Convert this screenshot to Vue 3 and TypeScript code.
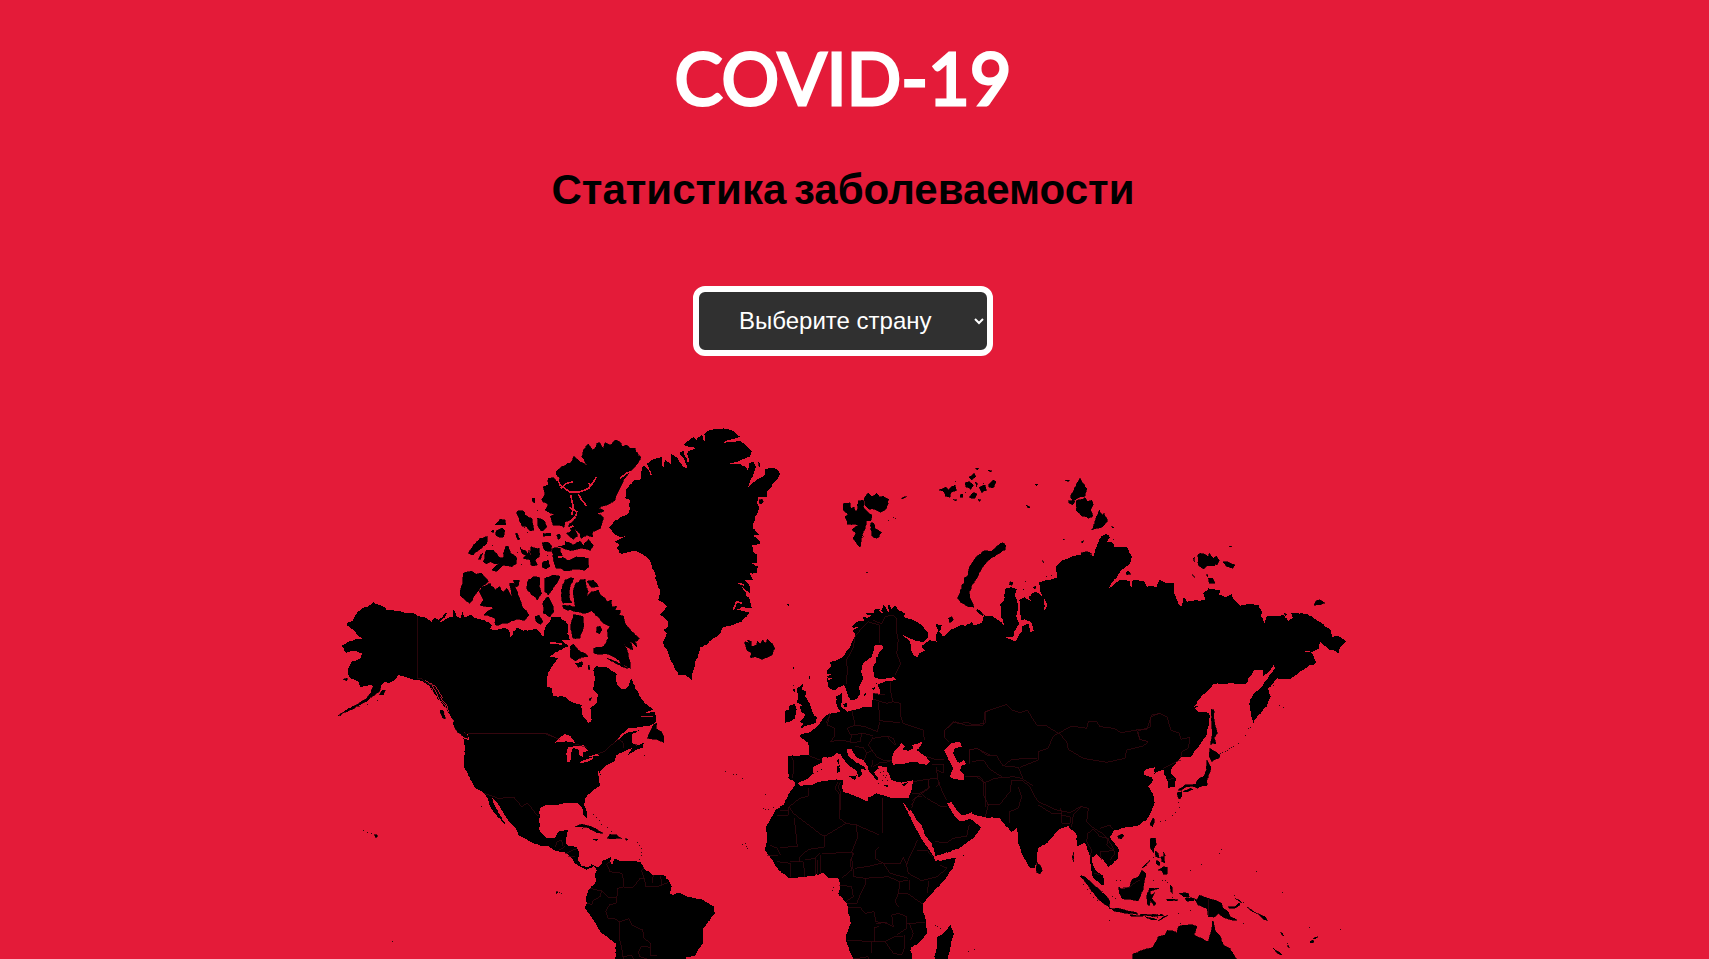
<script setup lang="ts">
import { ref } from 'vue'

type Sheet = 'A' | 'C' | 'D' | 'E' | 'F' | 'G' | 'H' | 'I' | 'J'

// Map sheets: top-left corner of each survey sheet, three sheet units per map unit.
const sheets: Record<Sheet, [number, number]> = {
  A: [330, 420], C: [520, 420], D: [440, 660], E: [740, 560], F: [820, 450],
  G: [960, 450], H: [740, 770], I: [940, 680], J: [1110, 680],
}

const LEFT = 330
const TOP = 420

function project(sheet: Sheet, points: string): number[][] {
  const [ox, oy] = sheets[sheet]
  return points.trim().split(/\s+/).map((p) => {
    const [x, y] = p.split(',').map(Number)
    return [ox - LEFT + x / 3, oy - TOP + y / 3]
  })
}

// Midpoint displacement gives coastlines their ragged edge.
let seed = 7
function rand(): number {
  seed = (seed * 16807) % 2147483647
  return seed / 2147483647 - 0.5
}

function roughen(points: number[][], amount: number): number[][] {
  const out: number[][] = []
  points.forEach((a, i) => {
    const b = points[(i + 1) % points.length]
    const length = Math.hypot(b[0] - a[0], b[1] - a[1])
    out.push(a)
    const steps = Math.min(12, Math.floor(length / 2.2))
    for (let s = 1; s < steps; s++) {
      const t = s / steps
      out.push([
        a[0] + (b[0] - a[0]) * t + rand() * amount,
        a[1] + (b[1] - a[1]) * t + rand() * amount,
      ])
    }
  })
  return out
}

function toPath(points: number[][], closed: boolean): string {
  return 'M' + points.map((p) => p[0].toFixed(1) + ',' + p[1].toFixed(1)).join('L') + (closed ? 'Z' : '')
}

function areas(sheet: Sheet, list: string[], amount = 1.3): string {
  return list.map((s) => toPath(roughen(project(sheet, s), amount), true)).join('')
}

function lines(sheet: Sheet, list: string[]): string {
  return list.map((s) => toPath(project(sheet, s), false)).join('')
}

function dots(sheet: Sheet, list: string): string {
  return project(sheet, list).map(([x, y]) => `M${Math.round(x)},${Math.round(y)}h1v1h-1z`).join('')
}

const eurasia = toPath(
  roughen(
    [
      ...project('E', `262,330 275,318 270,308 290,300 310,290 318,275 330,262 338,240 346,225 338,212 355,200 335,202
        350,186 372,182 368,172 385,170 378,158 400,160 405,146 425,150 430,136 440,146 447,132 455,148 465,136 474,150
        495,160 492,172 520,180 545,195 563,215 565,232 550,246 535,243 510,235 490,226 510,246 512,268 518,282 532,291
        538,280 555,272 545,256 570,240 590,245 588,228 594,212 585,190 605,195 598,215 610,230 630,210 665,195`),
      ...project('G', `18,528 35,515 40,525 65,520 72,495 100,500 135,527 122,495 120,465 132,450 138,415 152,411 170,418
        165,440 175,465 169,500 178,520 163,545 160,562 138,562 165,573 185,545 187,528 205,520 210,545 222,544 213,515
        195,508 182,510 178,450 195,440 188,410 194,440 218,460 205,440 228,425 250,440 255,485 262,465 240,425 236,395 290,385
        288,350 310,330 350,315 385,310 400,320 412,285 425,258 440,252 450,262 440,275 460,280 462,292 500,290 515,320
        510,340 480,365 460,395 445,415 480,390 510,392 512,418 518,390 550,393 562,410 590,410 600,388 618,400 642,400
        642,430 655,460 663,470 672,440 680,455 700,452 735,450 730,430 745,415 780,422 775,435 800,440 815,432 820,445
        840,467 875,462 895,465 905,485 904,500 915,522 920,500 970,495 985,515 998,505 992,488 1040,492 1080,515
        1112,542 1118,565 1122,557 1140,560 1158,575 1142,590 1135,612 1120,600 1110,600 1080,575 1078,595 1060,605
        1030,603 1055,608 1068,635 1062,645 1050,645 1020,665 990,688 950,685 925,715 932,740 920,770 905,785 885,808
        882,822 874,800 868,760 878,735 905,710 920,690 938,665 945,655 940,645 928,665 908,678 908,660 885,660 865,685
        858,703 820,700 760,702 735,730 700,770`),
      ...project('J', `268,76 255,85 265,97 285,95 298,100 298,130 290,165 265,202 240,232 215,232 200,245 183,268
        183,280 197,295 195,322 172,325 175,308 167,290 160,270 140,275 125,292 132,285 135,262 110,268 100,282 125,292
        130,300 115,320 130,345 135,370`),
      ...project('I', `645,365 640,380 620,420 590,438 545,445 525,450 510,470 520,485 537,510 535,535 505,560 490,540
        470,523 455,533 460,555 468,572 487,585 493,605 490,618 465,600 452,570 447,520 435,487 412,498 410,465 385,438
        355,450 320,490 293,505 291,540 285,562 270,565 250,530 235,490 230,445 215,455 195,435 180,415 130,412 95,400`),
      ...project('H', `700,150 722,172 700,205 650,238 600,255 583,258 585,272 600,272 648,262 640,292 610,335 575,370
        550,400 550,425 558,455 560,490 545,510 512,535 516,567 516,600 345,600 340,567 320,520 318,495 333,460 320,400
        295,370 300,345 295,325 265,325 250,310 200,320 150,325 115,300 100,275 75,240 82,200 77,175 90,150 105,122
        130,105 137,90 150,65 165,45`),
      ...project('E', `163,664 145,655 143,600 143,590 152,587 207,585 205,547 180,530 182,522 205,518 225,505 240,490 258,465
        275,460 300,455 290,435 288,410 305,400 306,425 302,440 320,455 350,448 375,440 395,442 398,420 400,398 418,405
        420,390 412,375 440,362 468,360 460,352 420,358 402,350 398,325 408,300 420,275 430,262 425,254 405,255 395,290
        370,310 363,335 370,355 358,378 360,400 350,418 330,422 320,395 312,372 300,380 282,392 265,382`),
    ],
    1.1,
  ),
  true,
)

const northAmerica = toPath(
  roughen(
    [
      ...project('A', `130,545 138,552 165,560 170,570 200,572 230,580 250,578 262,588 285,592 305,605 315,592 325,600
        352,577 345,592 330,606 362,590 368,590 371,567 380,590 392,594 398,576 404,592 420,584 440,595 465,600 485,615
        480,628 500,630 525,622 538,632 543,655 550,635 560,622 580,632 600,630 620,626 640,650 645,625 655,610 665,590
        690,590`),
      ...project('C', `135,612 128,600 138,605 145,620 142,640 150,660 125,660 145,680 120,690 90,710 115,715 95,740 84,760 80,785`),
      ...project('D', `322,82 335,85 340,107 370,110 400,130 425,135 427,165 445,190 455,180 450,145 470,130 474,105
        458,85 465,60 460,30 470,18 500,22 530,42 530,70 545,88 560,85 574,55 585,80 600,110 615,130 640,148 612,160
        645,155 648,185 630,200 600,205 565,205 545,222 522,250 548,228 575,213 598,210 605,215 575,225 575,245 588,258
        612,248 610,262 580,275 564,285 575,265 550,275 530,285 522,305 500,315 490,325 480,335 485,350 475,330 478,352 480,375
        450,400 435,415 432,435 442,460 440,473 430,465 425,440 415,430 395,428 370,430 345,435 320,435 300,445
        297,480 300,515 320,535 345,533 358,512 385,508 380,525 378,550 385,557 410,560 417,575 413,600 425,618 445,622
        455,612 470,622 480,618 490,600 515,590 510,605 518,612 522,597 545,603 575,603 600,605 612,625 640,645 670,645
        685,660 695,680 690,700 715,698 745,712 785,718 822,740 824,760 805,785 790,805 788,850 765,887 740,890 735,920
        528,920 527,850 480,815 460,780 435,745 440,730 438,710 445,690 468,665 465,640 470,632 460,618 440,630
        425,622 405,610 395,595 380,580 345,572 325,557 305,558 270,545 235,525 230,510 200,475 175,435 155,412 165,440
        180,465 197,493 185,485 165,460 150,440 145,420 132,400 105,385 90,355 72,320 75,260 70,235 88,242 85,225
        60,210 40,195`),
      ...project('A', `365,895 350,870 335,850 320,830 300,800 280,785 262,780 245,778 225,770 205,765 195,780 175,790
        165,785 155,795 135,815 125,795 90,800 85,785 60,775 52,750 62,730 75,722 92,715 95,700 75,692 50,698 35,677
        55,665 75,658 98,655 85,648 70,630 50,615 50,608 70,600 80,580 95,565 120,555`),
    ],
    1.1,
  ),
  true,
)

const greenland = areas('C', [
  `490,75 520,52 530,60 545,45 555,70 553,42 570,30 610,25 640,33 660,50 630,60 610,68 660,62 680,80 695,92 690,110
  660,122 628,130 660,132 675,140 685,155 687,130 700,125 708,140 700,165 685,200 705,185 735,165 736,148 750,143
  770,148 782,163 765,185 755,200 740,215 740,230 715,230 712,250 718,265 705,290 698,325 718,345 700,345 722,370
  695,378 700,395 712,405 712,430 695,430 715,440 710,460 690,460 700,480 675,480 690,500 692,520 665,500 690,540
  695,565 670,560 645,570 690,578 665,605 630,618 610,622 595,645 575,660 560,675 540,680 537,700 525,730 520,750
  515,780 495,765 475,765 460,735 445,700 430,670 440,640 428,630 445,620 442,600 420,585 440,560 425,545 415,540
  420,510 410,490 405,460 395,435 380,410 355,395 330,395 305,402 290,385 300,375 283,365 320,350 300,350 280,340
  268,322 285,300 325,282 332,240 315,235 320,205 345,180 360,180 365,140 375,138 398,168 380,130 400,118 425,112
  430,150 435,120 455,135 450,100 470,112 490,140 500,145 495,125 480,98 490,92 505,130 503,95 530,85`,
])

const arctic =
  areas('A', [
    '400,460 425,453 438,463 455,460 475,485 450,505 435,525 420,550 400,535 390,525 398,490',
    `480,490 455,500 448,515 460,540 450,555 475,560 490,565 470,575 462,585 480,590 495,595 497,615 530,610
    560,598 585,600 598,585 580,565 570,540 560,510 552,490 540,490 545,530 530,505 520,515 510,500 495,510`,
    '550,480 568,480 566,495 558,502', '415,400 430,375 450,355 473,350 470,370 455,385 440,395 430,405',
    '445,418 453,403 458,400 452,418',
    `460,425 470,390 490,390 500,400 505,410 520,415 525,380 535,378 540,400 558,410 558,432 545,440 520,435
    500,454 485,450 500,435 515,425 495,432 480,425 470,432`,
    '495,315 510,298 525,300 528,314 513,314', '497,335 517,325 525,332 520,352 508,352 497,345', '482,335 490,329 492,337',
    '560,275 580,272 585,285 605,295 612,330 600,333 590,320 575,318 568,295',
    '622,295 640,300 650,320 635,333 625,320', '640,340 662,340 662,348 640,349', '557,340 562,340 570,358 564,360',
    '570,382 590,395 592,410 597,390 600,410 602,380 628,385 628,410 615,420 622,435 605,437 600,420 580,415 588,405 575,400',
    '637,368 657,368 665,378 662,393 644,391', '640,425 655,419 660,439 648,447 636,440', '607,235 615,235 615,250 607,244',
    '595,480 610,470 630,473 628,500 635,520 622,540 605,525 590,505', '645,475 670,465 690,470 680,490 655,525 645,515',
    '640,545 655,530 665,550 672,575 660,590 640,580', '615,590 627,585 639,605 631,613 619,605',
    '25,887 50,870 75,856 90,848 110,836 122,818 130,800 155,790 150,810 130,828 110,845 90,855 60,870',
    '148,825 158,810 166,810 161,824', '330,870 340,870 345,898 337,893', '372,915 395,930 412,945 414,955 400,950 380,932',
    '172,770 185,757 192,768 180,780', '40,778 52,775 50,783', '668,385 690,385 690,445 678,445 668,410',
    '134,1243 142,1246 142,1252 136,1252',
  ]) +
  areas('C', [
    `108,155 125,140 155,125 162,108 175,120 203,138 185,110 190,90 205,72 218,90 225,85 230,70 240,68 250,85 255,68
    272,75 285,60 300,65 305,80 320,75 330,85 345,84 348,95 362,110 355,130 335,150 315,175 300,205 290,225 280,245
    260,255 235,265 252,272 232,280 250,292 242,325 218,335 218,350 200,345 182,355 180,342 165,325 172,350 160,358
    140,340 155,330 145,325 150,310 170,295 165,285 150,300 135,305 132,322 115,315 100,315 90,290 105,285 75,270
    85,255 65,240 75,222 70,200 85,192 85,175 100,172 108,185 120,175 108,165`,
    '115,380 135,375 135,362 160,375 180,362 190,375 205,358 220,375 210,392 185,385 150,392 130,385',
    '95,388 120,395 130,415 150,420 165,412 185,412 205,415 207,440 195,450 165,448 140,453 105,440',
    '162,475 150,473 135,480 123,510 125,540 130,550 155,548 148,530 150,500',
    `180,480 195,478 198,500 205,515 200,530 215,515 235,510 242,525 255,535 262,545 275,540 275,560 290,558 285,570 300,570
    298,585 312,590 315,610 335,635 358,655 345,665 350,682 330,665 340,690 318,680 305,660 315,680 325,700 332,745 310,735
    285,712 262,702 240,703 222,700 222,685 250,680 265,655 262,630 270,620 250,610 235,590 215,572 190,580 165,575 130,565
    128,555 165,560 160,520 165,495`,
    '200,485 220,480 235,500 215,502', '230,622 240,618 246,630 238,642 229,636', '160,585 190,590 190,625 180,655 160,655 152,620',
    '150,710 150,680 160,672 175,690 195,700 205,712 185,712 165,722', '175,738 187,727 185,741', '204,735 208,735 208,748 204,748',
    '674,665 688,672 682,660 693,664 695,680 710,675 712,663 722,672 728,660 738,670 742,658 758,672 765,685 755,705 725,718 706,710 690,712 695,698 680,690',
    '717,240 727,237 730,246 724,252 717,250', '713,125 718,128 720,142 716,138', '110,345 118,342 121,355 114,358',
  ]) +
  areas('F', [
    `70,162 90,158 92,175 102,172 105,185 112,180 115,152 130,150 132,175 155,195 152,212 140,212 130,245 120,292 98,265
    108,250 95,240 118,225 82,222 75,200 85,195 70,180`,
    '132,148 145,130 155,140 170,130 178,142 190,138 206,148 200,175 180,187 165,178 148,178 135,165',
    '152,218 160,218 165,235 185,248 170,265 155,258', '245,145 258,139 258,141 247,147',
    '358,120 378,112 385,120 405,105 410,120 395,125 390,142 375,138 372,125', '435,100 448,95 460,105 452,118 438,112',
    '465,95 472,100 470,110', '447,82 462,70 468,80 455,90', '478,112 495,105 500,120 485,128', '505,105 520,90 528,95 522,112 508,112',
    '448,142 458,128 472,132 465,145', '420,135 428,132 428,142 420,142', '467,55 476,54 472,60', '503,61 515,62 512,66',
    '644,103 654,102 650,107', '618,165 630,172 625,174', '736,90 748,91 744,95', '400,148 410,150 408,154', '475,148 482,150 478,154',
    `540,280 550,278 558,287 555,300 530,314 503,332 484,357 469,387 458,402 448,425 452,450 462,472 440,468 428,460 412,445
    420,430 425,405 433,400 432,385 442,378 452,345 468,322 488,304 515,303`,
    '470,480 480,482 490,495 480,492', '385,505 395,500 400,510 390,518', '570,395 580,398 576,406 568,404',
    '752,138 768,108 780,85 785,95 800,115 795,138 775,143 765,150 752,145', '745,152 765,152 758,165 748,160',
    '768,152 795,143 803,155 815,150 820,165 812,180 818,198 805,205 785,198 768,180',
    '838,180 848,195 852,190 863,213 850,228 815,240 825,212', '640,412 648,408 645,418', '728,268 732,268 732,270', '666,332 670,332 670,338',
    '782,276 792,272 788,278', '782,310 800,305 815,312 800,318',
  ]) +
  areas('G', [
    '713,315 720,310 732,312 745,320 748,310 758,322 765,348 740,348 730,357 715,345', '760,325 770,318 778,332 770,345 760,340',
    '788,335 800,335 825,345 818,355 800,350', '745,385 758,385 766,400 748,400', '738,374 745,374 742,380', '700,325 703,322 703,335',
    '1062,466 1068,452 1080,449 1094,459 1080,464', '497,368 505,362 512,372 500,374', '808,289 815,289 813,291', '697,374 705,381 702,381',
    '455,228 463,233 458,235', '972,490 980,493 976,498',
  ], 0.6)

const europeIslands =
  areas('E', [
    `170,385 190,372 185,388 200,395 195,410 210,430 215,448 222,468 232,470 228,488 205,495 180,505 190,490 178,485 190,475
    195,462 185,458 180,440 188,435 172,428 175,410`,
    '135,452 148,448 145,437 165,433 170,448 165,475 150,485 135,488', '140,133 151,130 146,137',
    '300,576 320,566 325,588 345,605 375,622 378,632 362,625 366,643 356,652 350,635 325,615 310,598', '325,648 350,646 345,660',
    '290,618 299,616 299,636 290,638', '292,600 297,596 297,614 293,612', '430,675 450,678 440,681', '485,672 503,667 492,680',
    '310,432 322,428 322,440 312,440', '372,405 378,398 376,412', '408,370 412,368 412,374', '396,385 405,382 402,391', '624,175 634,171 640,182 630,188',
    '160,388 166,385 162,402', '206,348 211,350 207,360', '157,320 163,322 160,328', '240,630 247,627 244,632',
    '712,148 725,158 728,168 716,160', '445,618 465,615 460,622 446,625', '405,655 415,650 412,662', '520,545 526,540 526,549',
  ], 0.8) +
  areas('H', ['590,505 612,488 632,465 641,492 632,530 618,580 590,580 583,560 590,535', '667,256 677,257 670,259'], 1)

const pacific =
  areas('I', [
    '290,545 300,555 307,572 300,581 291,578', '420,588 435,590 455,610 480,630 490,640 500,650 510,665 508,683 490,670 465,645 440,612',
    '508,685 530,685 555,690 580,695 595,703 560,700 530,695', '600,703 625,704 655,704 655,709 625,708',
    '537,620 545,628 570,620 575,600 595,590 605,570 617,580 612,610 610,625 600,650 595,663 570,658 545,655 538,640',
    '533,468 545,462 552,466 545,476 535,475', '630,435 640,413 643,420 638,440', '632,478 645,475 648,495 640,510 632,505',
    '397,530 401,518 399,545', '620,648 628,625 658,625 630,632 632,645 645,638 635,655 648,670 642,678 632,660 628,678 622,672',
  ], 1) +
  areas('J', [
    '303,88 311,90 314,130 322,160 312,175 318,192 308,190 302,195 306,160 304,120', '300,205 330,225 328,235 312,240 305,245 298,230',
    '290,240 302,260 300,275 292,295 290,318 275,318 262,325 245,318 225,322 215,330 205,330 225,315 255,312 268,295 280,290 290,270',
    '202,338 215,335 215,350 208,358 203,350', '220,335 240,325 250,328 232,336', '122,475 135,475 138,495 130,508 120,500',
    '145,570 160,560 172,562 172,582 160,582 155,572', '95,565 120,540 118,545 100,563', '135,512 145,520 148,535 138,530',
    '152,530 162,530 165,548 155,545', '140,540 150,548 148,558 138,550', '122,505 132,512 130,518', '160,515 166,528 162,530',
    `250,655 262,660 268,645 295,655 320,662 335,670 340,685 355,695 360,710 380,720 365,720 340,712 325,700 315,710 295,710
    290,685 265,675`,
    '208,640 235,640 238,652 220,650', '225,655 250,655 252,662 230,663', '355,680 375,680 388,668 390,675 375,685 358,685',
    '410,680 425,690 440,700 425,694', '443,700 465,710 472,722 460,717', '490,805 505,815 516,825 500,818', '600,785 608,780 612,786 602,790',
    '610,775 625,770 615,777', '145,722 160,710 175,705 155,718', '105,710 130,715 140,720 118,716', '170,658 205,660 200,662 172,662',
    '60,705 100,706 100,709 62,709', '120,706 160,704 160,707 122,709', '375,655 388,660 396,670 388,664',
    `68,822 100,810 130,800 145,770 165,765 172,750 200,758 205,740 225,735 250,735 262,740 252,765 275,775 295,785 302,760
    308,722 318,755 330,768 340,795 360,805 380,837 380,860 68,860`,
    '181,615 186,620 188,640 183,636', '512,755 522,768 515,764', '535,795 538,803 532,799',
  ], 1) +
  areas('D', [
    '622,235 640,195 650,190 648,205 665,215 672,230 672,248 655,240 640,238', '405,500 425,493 455,500 490,520 470,518 440,502',
    '500,535 510,523 530,525 545,535 520,537', '458,538 475,537 470,542', '555,536 565,538 558,541', '348,695 354,696 350,701',
    '405,10 425,5 428,14 415,22', '500,-5 530,5 565,25 545,20', '443,20 449,22 448,30', '447,118 455,113 450,124', '574,252 590,255 580,260',
  ], 0.8)

const specks =
  dots('D', `122,438 855,332 880,343 888,341 425,505 460,462 468,470 478,480 482,492 500,500 512,512 590,545 598,555
  602,565 604,575 604,585 598,598 612,284 358,697 364,700`) +
  dots('H', `7,222 18,228 22,235 15,220 68,115 75,118 85,118 100,112 75,72 275,360 280,350 585,465 592,468
  600,473 685,542 703,536`) +
  dots('J', `150,422 165,420 185,405 195,395 207,380 205,365 330,218 335,216 345,212 350,209 358,205 364,201 370,198 385,190
  405,165 415,145 420,140 332,508 326,520 272,552 240,570 438,574 515,637 508,75 518,82 515,760
  530,790 690,748 598,740 400,730 185,650 130,530 165,600 172,605 372,645 400,665
  490,15 487,2 130,600 155,600 210,730 240,690 205,700`) +
  dots('E', '378,36 6,655 160,375 420,635 430,632 438,645 425,660 415,668 440,660 435,652 428,645 220,640 230,632 415,625') +
  dots('F', '140,365 205,209 220,200 225,204 405,94 435,125 490,98 880,266 678,377 692,374 615,394') +
  dots('I', '400,515 398,540 422,585 430,612 440,628 450,640 460,650 470,660 508,720 540,600 528,600 85,813 103,806 650,712 525,655 515,648') +
  dots('A', '485,375 562,395 572,432 650,405 590,337 582,320 622,270 110,853 140,840 30,885 100,1229 112,1235 122,1238 187,1563')

const seas =
  areas('E', [
    `172,670 200,658 218,642 220,622 245,608 248,592 270,592 290,580 305,582 318,580 322,566 335,568 348,590 372,602 384,620 388,635 405,655
    412,652 402,638 415,625 412,618 440,620 442,635 455,660 485,668 520,660 515,690 505,715 460,715 410,700 385,712 385,725
    350,710 310,695 305,680 310,662 290,658 240,665 215,675 180,677`,
    '455,605 460,580 485,550 495,560 488,568 505,573 522,565 515,555 548,545 540,560 530,570 560,592 570,605 560,615 520,605 490,612 460,614',
    '612,570 635,550 660,545 665,560 645,565 640,580 652,605 660,608 672,600 678,612 662,618 660,632 671,642 671,660 645,658 630,650 640,625 622,590',
  ], 0.8) +
  areas('H', [
    '490,100 498,108 508,125 512,118 530,150 545,165 555,195 575,220 585,250 585,268 575,250 550,215 530,180 515,150 505,130',
    '622,100 635,97 650,120 665,135 685,133 695,126 700,145 725,144 715,165 690,145 680,150 660,154 645,140 632,118',
  ], 0.6) +
  areas('D', [
    '345,248 358,235 375,222 392,228 405,250 385,245 365,245',
    '380,305 380,275 385,262 405,258 430,256 445,272 430,275 428,292 418,285 415,268 398,265 392,290 390,305',
    '418,308 430,300 460,292 450,302 430,308', '445,290 473,281 476,287 454,292', '548,222 570,207 640,195 625,225 605,245 588,255 575,245 575,225 598,210',
    '690,700 700,690 712,698 700,706', '513,603 520,603 519,612 514,612',
  ], 0.8)

const inlets =
  lines('C', [
    '108,165 120,195 150,216 180,215 205,206 212,198 230,170', '175,222 185,240 200,258', '122,205 140,190 160,185', '152,225 160,262 155,285',
    '300,175 320,160 335,153', '212,198 206,190', '148,262 170,275 168,288', '640,570 650,545 665,550', '655,490 672,495',
    '115,412 205,398', '90,668 125,672', '118,325 145,325 160,318',
  ]) +
  lines('G', ['865,415 858,410']) +
  lines('E', ['262,345 272,343', '265,357 275,355', '378,172 392,166', '420,150 428,160', '440,142 446,155'])

const fjords = lines('A', [
  '285,780 305,795 318,815 328,840 345,855 352,875', '300,788 318,800 330,822 340,835', '305,805 312,825 322,835', '352,880 372,905',
]) + lines('D', ['0,112 20,135 25,155', '8,140 15,165', '475,340 478,350', '602,170 640,168'])

const borders =
  lines('A', ['262,588 262,775 275,775 290,790 310,795', '418,940 645,940 655,945 690,958']) +
  lines('D', [
    '85,220 318,220 345,232', '405,252 440,262', '473,282 492,275 520,250 535,238 548,245 552,265', '132,400 175,415 222,412 245,440 262,430 280,450 290,465 298,466',
    '345,560 352,545 365,540 368,558', '358,570 375,560', '375,582 395,572 412,565', '385,590 405,588', '510,605 500,612 510,635 545,640 552,665 550,682 532,685 530,730',
    '450,685 485,693 505,712 528,712', '485,693 480,710 460,722 455,735 440,728', '528,730 508,735 497,755 505,775 522,775 538,785 537,830 545,865 550,897',
    '552,682 580,682 600,655 612,655 605,632 612,622', '612,655 618,680 650,680 685,668', '640,645 636,668', '662,648 665,675',
    '538,785 568,776 575,795 608,810 612,835 632,850 630,885 650,888', '550,890 575,885 580,897', '630,862 605,858 595,875 600,890 620,897',
  ]) +
  lines('E', [
    '318,372 322,335 320,300 340,262 345,230 365,205 385,185 400,190 418,195 418,250', '400,180 425,192 435,170 460,165 470,175 468,210 475,240 470,280 482,310 465,345',
    '450,365 452,395 458,425', '400,400 435,405', '400,418 440,430 458,425 480,430 482,470 490,490 550,510 553,540', '415,425 420,482 480,488', '335,450 345,495 322,505 332,525 370,520 400,527',
    '345,495 375,500 412,515 420,485', '270,460 262,495 285,505 282,530 272,545', '272,545 300,540 330,545 335,525', '365,520 360,545 330,548', '400,530 385,555 410,590 430,600 455,600',
    '400,535 440,528 465,555', '440,528 460,535 468,555', '345,560 370,562 380,580 400,570', '380,580 372,600', '400,620 420,608 450,605', '398,600 395,622', '270,465 258,490', '155,592 162,605 158,655', '207,587 240,600',
    '750,452 735,455 735,490 700,495 685,488 655,490 640,485 615,510 612,530 625,545', '688,612 688,570 710,565 750,585', '560,590 585,598 612,600', '575,612 612,612 610,640 590,630',
    '520,665 560,658 592,655 590,620', '592,655 605,690 620,720', '690,650 720,650 735,670 735,740', '302,665 295,680 302,700 300,750', '427,715 427,750',
    '515,700 540,700 565,685 565,660', '515,735 530,710 545,710',
  ]) +
  lines('H', [
    '205,55 205,78 180,85 147,110 145,135 110,137', '147,110 160,130 245,195 255,198 318,160 298,145 300,75 285,55 295,35', '120,122 145,122', '163,145 172,230 120,232',
    '255,198 252,232 205,238 180,262 178,275', '318,160 350,165 418,195', '427,85 427,190', '350,165 352,205 335,245 342,255', '245,250 335,248', '90,225 112,235 122,255', '80,255 115,255',
    '112,275 150,280 152,320', '150,275 190,275 195,320', '195,270 225,265 240,250', '225,265 225,315', '232,270 232,312', '242,255 242,310', '340,250 330,275 335,300 305,325', '335,265 342,320 375,325 375,345 360,375 350,400 320,402',
    '418,230 408,240 405,265 430,280 450,310 505,325', '345,295 380,290 430,278', '430,280 480,282 490,262 500,285', '500,285 505,310 545,332 590,320 622,295 600,285', '532,210 520,240 508,260 500,285', '532,240 560,240 580,262',
    '375,325 445,320 480,335 475,370 465,395 475,410', '475,370 505,372 548,402', '510,330 508,360', '563,370 565,332', '480,335 505,330', '298,345 335,350 340,380 318,395', '325,412 360,412 375,430 402,425 408,455 440,460 460,470 455,435 475,430',
    '320,510 395,515 435,515 465,500 490,498', '402,515 402,472 418,470', '408,460 440,458', '475,430 500,440 500,475 470,495', '500,460 555,458', '508,460 520,490 512,510', '395,515 395,550', '435,515 460,550 485,555 495,530 492,495', '340,567 385,560 385,567',
    '520,95 515,115', '515,92 545,70 560,85 600,108 620,110', '585,215 620,218 640,205 680,198 688,165', '545,70 568,55 565,30', '600,35 590,50',
  ]) +
  lines('I', [
    '12,170 15,150 45,125 75,135 130,135 135,95 200,73 215,90 240,98 262,90 290,135 320,138 355,160 338,170 325,205 295,215 295,240 240,262', '88,250 90,210 112,205 140,225 170,228 190,258 215,238 290,235',
    '95,245 130,240 150,268 185,290', '75,290 110,290 130,305 130,345 145,375 135,412', '130,310 165,295 220,290 245,295', '195,258 235,262 250,298 280,318', '140,375 180,372 210,335 215,300 250,300',
    '245,300 270,320 285,350 295,365 350,390 390,398 425,378', '235,320 245,350 235,385 208,395 210,430', '295,375 335,400 365,400 360,385', '365,400 365,430 390,430 390,410 362,405', '395,440 400,405 425,380 445,385 440,425 455,440 470,450',
    '355,160 395,138 440,145 445,125 470,125 480,140 520,145 545,158 600,148', '358,160 380,185 385,208 430,235 500,247 555,235 560,210 610,198 625,185 598,178 595,155',
    '443,460 440,485 455,510 450,530', '443,460 460,448 480,470 505,475 500,495 525,515', '480,445 510,435 518,448', '470,450 490,462 515,495 525,520 510,540', '480,515 520,512', '480,515 485,540', '540,625 570,622 578,612 600,600', '600,150 620,148 635,105 660,100', '463,580 480,585',
  ]) +
  lines('J', ['80,150 90,178 115,185', '85,152 120,142 122,110 150,100 172,112 182,150 208,160 212,178 240,172 235,205 215,215 212,235', '212,240 185,252 158,266', '175,298 192,296', '295,658 295,708'])

const country = ref('')
const countries = ['Россия', 'США', 'Канада', 'Китай', 'Германия', 'Франция', 'Италия', 'Япония']
</script>

<template>
  <main class="page">
    <h1 class="title">COVID-19</h1>
    <h2 class="subtitle">Статистика заболеваемости</h2>
    <select v-model="country" class="country">
      <option value="">Выберите страну</option>
      <option v-for="name in countries" :key="name" :value="name">{{ name }}</option>
    </select>
    <svg class="map" viewBox="0 0 1030 539" shape-rendering="crispEdges" aria-label="Карта мира">
      <path class="land" :d="northAmerica" />
      <path class="land" :d="eurasia" />
      <path class="sea" :d="seas" />
      <path class="land" :d="greenland" />
      <path class="land island" :d="arctic" />
      <path class="land" :d="europeIslands" />
      <path class="land island" :d="pacific" />
      <path class="land speck" :d="specks" />
      <path class="inlet" :d="inlets" />
      <path class="fjord" :d="fjords" />
      <path class="border" :d="borders" />
    </svg>
  </main>
</template>

<style>
body {
  background: #e41b39;
}
</style>

<style scoped>
.page {
  box-sizing: border-box;
  width: 1686px;
  height: 959px;
  overflow: hidden;
  display: flex;
  flex-direction: column;
  align-items: center;
  font-family: "Liberation Sans", Arial, sans-serif;
}
.title {
  margin: 31px 0 0;
  height: 92px;
  line-height: 92px;
  color: #fff;
  font-family: Lato, sans-serif;
  font-size: 72px;
  font-weight: 400;
  -webkit-text-stroke: 3px #fff;
}
.subtitle {
  margin: 43px 0 0;
  height: 48px;
  line-height: 48px;
  color: #000;
  font-size: 42px;
  font-weight: 700;
  word-spacing: -4px;
}
.country {
  box-sizing: border-box;
  margin-top: 72px;
  flex: none;
  width: 300px;
  height: 70px;
  padding: 0 1px 2px 36px;
  border: 6px solid #fff;
  border-radius: 12px;
  background: #303030;
  color: #fff;
  font-family: "Liberation Sans", Arial, sans-serif;
  font-size: 24px;
  outline: none;
}
.map {
  display: block;
  flex: none;
  width: 1030px;
  height: 539px;
  margin-top: 64px;
  margin-left: 4px;
}
.land {
  fill: #000;
}
.island {
  stroke: #000;
  stroke-width: 0.6;
}
.speck {
  opacity: 0.8;
}
.sea {
  fill: #e41b39;
}
.inlet {
  fill: none;
  stroke: #e41b39;
  stroke-width: 1.6;
}
.fjord {
  fill: none;
  stroke: #e41b39;
  stroke-width: 0.8;
}
.border {
  fill: none;
  stroke: #3a070f;
  stroke-width: 0.7;
}
</style>
